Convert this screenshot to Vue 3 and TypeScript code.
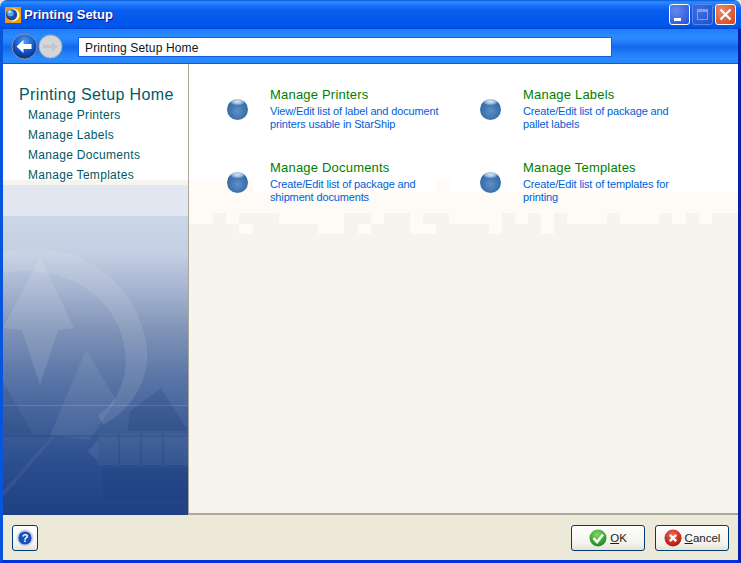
<script setup lang="ts">
interface Task {
  title: string
  lines: string[]
}

const links = ['Manage Printers', 'Manage Labels', 'Manage Documents', 'Manage Templates']

const tasks: Task[] = [
  { title: 'Manage Printers', lines: ['View/Edit list of label and document', 'printers usable in StarShip'] },
  { title: 'Manage Labels', lines: ['Create/Edit list of package and', 'pallet labels'] },
  { title: 'Manage Documents', lines: ['Create/Edit list of package and', 'shipment documents'] },
  { title: 'Manage Templates', lines: ['Create/Edit list of templates for', 'printing'] },
]

// backdrop patches of the content pane, as [x, width]
const creamSteps = [[0, 64], [247, 14]]
const greyRow = [[24, 13], [50, 40], [155, 27], [195, 26], [234, 26], [313, 13], [339, 13], [365, 13], [418, 13], [470, 13], [497, 13], [523, 26]]
const creamRow = [[50, 14], [129, 26], [169, 13], [221, 26], [300, 13], [352, 13]]
</script>

<template>
  <div class="window">
    <header class="titlebar">
      <svg class="app-icon" width="16" height="16" viewBox="0 0 16 16">
        <rect width="16" height="16" fill="#f29a12" />
        <circle cx="8" cy="8" r="6.5" fill="#fff6a0" />
        <circle cx="6.6" cy="7.8" r="5.6" fill="#1a4aa0" />
        <circle cx="5.4" cy="6.2" r="3.2" fill="#5aa8e8" />
        <circle cx="4.6" cy="4.8" r="1.3" fill="#d8eefc" />
      </svg>
      <span class="title">Printing Setup</span>
      <div class="caption-buttons">
        <div class="cap cap-min"><span class="min-bar"></span></div>
        <div class="cap cap-max"><span class="max-box"></span></div>
        <div class="cap cap-close">
          <svg width="13" height="13" viewBox="0 0 13 13">
            <path d="M1.5 1.5 11.5 11.5M11.5 1.5 1.5 11.5" stroke="#fff" stroke-width="2.2" />
          </svg>
        </div>
      </div>
    </header>

    <div class="frame">
      <nav class="navbar">
        <div class="nav-buttons">
          <svg class="nav-btn" width="27" height="27" viewBox="0 0 27 27">
            <defs>
              <radialGradient id="backFill" cx="50%" cy="30%" r="75%">
                <stop offset="0" stop-color="#4f9bf0" />
                <stop offset="0.55" stop-color="#0f55c4" />
                <stop offset="1" stop-color="#06296f" />
              </radialGradient>
            </defs>
            <circle cx="13.5" cy="13.5" r="12.5" fill="url(#backFill)" stroke="#8a94a6" />
            <path d="M5.5 13.5 12.5 7V11H20.5V16H12.5V20Z" fill="#fff" />
          </svg>
          <svg class="nav-btn" width="25" height="25" viewBox="0 0 25 25">
            <circle cx="12.5" cy="12.5" r="11.5" fill="#d3d5d8" stroke="#a7aaae" />
            <path d="M5 11H14V8L20 12.5 14 17V14H5Z" fill="#c2c5c9" />
          </svg>
        </div>
        <div class="address">Printing Setup Home</div>
      </nav>

      <div class="body">
        <aside class="sidebar">
          <svg class="art" width="185" height="299" viewBox="0 0 185 299">
            <g fill="#fff">
              <path d="M0 36C55 20 125 50 142 120 152 160 128 195 100 209L95 199C118 184 128 155 120 124 106 70 50 48 0 57Z" opacity=".1" />
              <path d="M37 41 71 112 55 114 37 169 19 114 0 112Z" opacity=".11" />
              <path d="M83 134 113 184 87 224 47 219Z" opacity=".07" />
              <rect y="189" width="185" height="1" opacity=".14" />
              <path d="M0 275 50 219 52 220 0 281Z" opacity=".06" />
              <path d="M85 235 95 224V246Z" opacity=".08" />
              <rect x="95" y="218" width="20" height="31" opacity=".05" />
              <rect x="117" y="218" width="20" height="31" opacity=".05" />
              <rect x="139" y="218" width="20" height="31" opacity=".05" />
              <rect x="161" y="218" width="24" height="31" opacity=".05" />
            </g>
            <g fill="#0b2a63">
              <path d="M0 165 30 219H0Z" opacity=".12" />
              <path d="M127 195 158 172 185 215H125Z" opacity=".16" />
              <rect y="219" width="185" height="2" opacity=".16" />
              <rect x="100" y="252" width="85" height="32" opacity=".1" />
            </g>
          </svg>
          <h2 class="side-heading">Printing Setup Home</h2>
          <a v-for="link in links" :key="link" class="side-link">{{ link }}</a>
        </aside>

        <main class="content">
          <svg class="backdrop" width="549" height="200" viewBox="0 0 549 200">
            <rect v-for="r in creamSteps" :key="r[0]" :x="r[0]" y="116" :width="r[1]" height="12" fill="#fefaf5" />
            <rect y="128" width="549" height="32" fill="#fefaf5" />
            <rect v-for="r in greyRow" :key="r[0]" :x="r[0]" y="149" :width="r[1]" height="11" fill="#f5f4ef" />
            <rect y="160" width="549" height="40" fill="#f5f4ef" />
            <rect v-for="r in creamRow" :key="r[0]" :x="r[0]" y="160" :width="r[1]" height="10" fill="#fefaf5" />
          </svg>
          <div class="tasks">
            <div v-for="task in tasks" :key="task.title" class="task">
              <span class="orb"></span>
              <div class="task-text">
                <div class="task-title">{{ task.title }}</div>
                <div v-for="line in task.lines" :key="line" class="task-line">{{ line }}</div>
              </div>
            </div>
          </div>
        </main>
      </div>

      <footer class="footer">
        <button class="btn btn-help">
          <svg width="18" height="18" viewBox="0 0 18 18">
            <circle cx="9" cy="9" r="8.5" fill="#c9d6ef" />
            <circle cx="9" cy="9" r="6.6" fill="#1c4fb4" />
            <text x="9" y="13" text-anchor="middle" class="help-mark">?</text>
          </svg>
        </button>
        <div class="actions">
          <button class="btn btn-action">
            <svg width="18" height="18" viewBox="0 0 18 18">
              <defs>
                <radialGradient id="okFill" cx="45%" cy="30%" r="75%">
                  <stop offset="0" stop-color="#7fdc5c" />
                  <stop offset="1" stop-color="#13811f" />
                </radialGradient>
              </defs>
              <circle cx="9" cy="9" r="8.5" fill="url(#okFill)" />
              <path d="M4.5 9 8 13 14 5.5" fill="none" stroke="#fff" stroke-width="2.6" />
            </svg>
            <span><u>O</u>K</span>
          </button>
          <button class="btn btn-action">
            <svg width="18" height="18" viewBox="0 0 18 18">
              <defs>
                <radialGradient id="cancelFill" cx="45%" cy="30%" r="75%">
                  <stop offset="0" stop-color="#f0664f" />
                  <stop offset="1" stop-color="#a80f0c" />
                </radialGradient>
              </defs>
              <circle cx="9" cy="9" r="8.5" fill="url(#cancelFill)" />
              <path d="M5.8 5.8 12.2 12.2M12.2 5.8 5.8 12.2" stroke="#fff" stroke-width="2.4" />
            </svg>
            <span><u>C</u>ancel</span>
          </button>
        </div>
      </footer>
    </div>
  </div>
</template>

<style>
html,
body {
  margin: 0;
  background: #ece9d8;
}
</style>

<style scoped>
.window {
  display: flex;
  flex-direction: column;
  width: 741px;
  height: 563px;
  font-family: 'Liberation Sans', Arial, sans-serif;
  overflow: hidden;
}

.titlebar {
  display: flex;
  align-items: center;
  flex: 0 0 29px;
  padding: 0 5px;
  border-radius: 7px 7px 0 0;
  background: linear-gradient(#0a57d6 0, #2f8cff 2px, #1a75fb 5px, #0a5ff0 10px, #0056ea 22px, #0059ef 26px, #0045d2 29px);
}

.app-icon {
  margin-right: 3px;
}

.title {
  color: #fff;
  font-size: 13px;
  font-weight: 700;
  text-shadow: 1px 1px #0f1089;
}

.caption-buttons {
  display: flex;
  gap: 2px;
  margin-left: auto;
}

.cap {
  position: relative;
  display: flex;
  align-items: center;
  justify-content: center;
  box-sizing: border-box;
  width: 21px;
  height: 21px;
  border: 1px solid #fff;
  border-radius: 3px;
}

.cap-min {
  background: radial-gradient(circle at 30% 30%, #6488ea, #2350d8);
}

.min-bar {
  position: absolute;
  left: 4px;
  bottom: 3px;
  width: 7px;
  height: 3px;
  background: #fff;
}

.cap-max {
  border-color: #5c86e8;
  background: radial-gradient(circle at 30% 30%, #3f6fe0, #1f4fd0);
}

.max-box {
  box-sizing: border-box;
  width: 11px;
  height: 11px;
  border: 1px solid #7f9fe8;
  border-top-width: 3px;
}

.cap-close {
  background: radial-gradient(circle at 30% 30%, #ec8a66, #d4401a);
}

.frame {
  display: flex;
  flex: 1;
  flex-direction: column;
  min-height: 0;
  border-left: 3px solid #0855dd;
  border-right: 3px solid #0a1fa8;
  border-bottom: 3px solid #0831d9;
}

.navbar {
  display: flex;
  align-items: center;
  flex: 0 0 35px;
  box-sizing: border-box;
  border-bottom: 1px solid #0a5ae8;
  background: linear-gradient(#1f7cfa 0, #2a8cff 8px, #1f7cf8 14px, #1567ea 18px, #1f7cf8 24px, #2a8cff 30px, #2484fb 35px);
}

.nav-buttons {
  display: flex;
  align-items: center;
  width: 75px;
  padding-left: 8px;
  box-sizing: border-box;
}

.nav-btn {
  flex: none;
}

.address {
  box-sizing: border-box;
  width: 534px;
  height: 20px;
  margin-top: 1px;
  padding-left: 6px;
  border: 1px solid #1560e0;
  background: #fff;
  color: #10141c;
  font-size: 12px;
  line-height: 20px;
  letter-spacing: 0.15px;
}

.body {
  display: flex;
  flex: 1;
  min-height: 0;
}

.sidebar {
  position: relative;
  display: flex;
  flex: 0 0 185px;
  flex-direction: column;
  align-items: flex-start;
  padding: 21px 0 0 25px;
  box-sizing: border-box;
  background: linear-gradient(#fff 0, #fff 116px, #f5f4ee 116px, #f5f4ee 121px, #e3e7f2 121px, #e3e7f2 152px, #cdd6e8 152px, #c3cee2 190px, #a6b4d0 225px, #8094b8 265px, #5c78a8 310px, #3f5f98 360px, #2c4e8e 400px, #1f4184 451px);
}

.art {
  position: absolute;
  left: 0;
  top: 152px;
}

.side-heading {
  position: relative;
  left: -9px;
  margin: 0;
  color: #005a66;
  font-size: 16px;
  font-weight: 400;
  line-height: 20px;
  letter-spacing: 0.37px;
}

.side-link {
  position: relative;
  color: #005a66;
  font-size: 12px;
  line-height: 20px;
  letter-spacing: 0.3px;
}

.content {
  position: relative;
  flex: 1;
  border-left: 1px solid #aca899;
  border-bottom: 2px solid #aca899;
  background: #f5f4ef;
}

.backdrop {
  position: absolute;
  left: 0;
  top: 0;
  background: #fff;
}

.tasks {
  position: relative;
  display: grid;
  grid-template-columns: 253px 253px;
  grid-auto-rows: 73px;
  padding: 23px 0 0 38px;
}

.task {
  display: flex;
  align-items: flex-start;
}

.orb {
  flex: none;
  width: 21px;
  height: 21px;
  margin: 12px 22px 0 0;
  border-radius: 50%;
  background:
    radial-gradient(ellipse 8px 4px at 50% 12%, #d8e4f2 0, #9ab9dc 60%, transparent 100%),
    radial-gradient(circle at 50% 58%, #5f8fc6 0, #3b70ad 55%, #245892 100%);
}

.task-text {
  display: flex;
  flex-direction: column;
}

.task-title {
  margin-bottom: 2px;
  color: #008000;
  font-size: 13px;
  line-height: 16px;
  letter-spacing: 0.2px;
}

.task-line {
  color: #0060d8;
  font-size: 11px;
  line-height: 13px;
  letter-spacing: -0.14px;
  white-space: nowrap;
}

.footer {
  display: flex;
  align-items: center;
  justify-content: space-between;
  flex: 0 0 45px;
  box-sizing: border-box;
  padding: 0 9px;
  background: #ece9d8;
}

.actions {
  display: flex;
  gap: 10px;
}

.btn {
  display: flex;
  align-items: center;
  justify-content: center;
  gap: 3px;
  box-sizing: border-box;
  height: 26px;
  padding: 0;
  border: 1px solid #003c74;
  border-radius: 3px;
  background: linear-gradient(#fff, #f4f3ee 70%, #e6e3d6);
  color: #1c1c1c;
  font-family: inherit;
  font-size: 11.5px;
}

.btn-help {
  width: 26px;
}

.btn-action {
  width: 74px;
}

.help-mark {
  fill: #fff;
  font-family: 'Liberation Sans', Arial, sans-serif;
  font-size: 11px;
  font-weight: 700;
}
</style>
